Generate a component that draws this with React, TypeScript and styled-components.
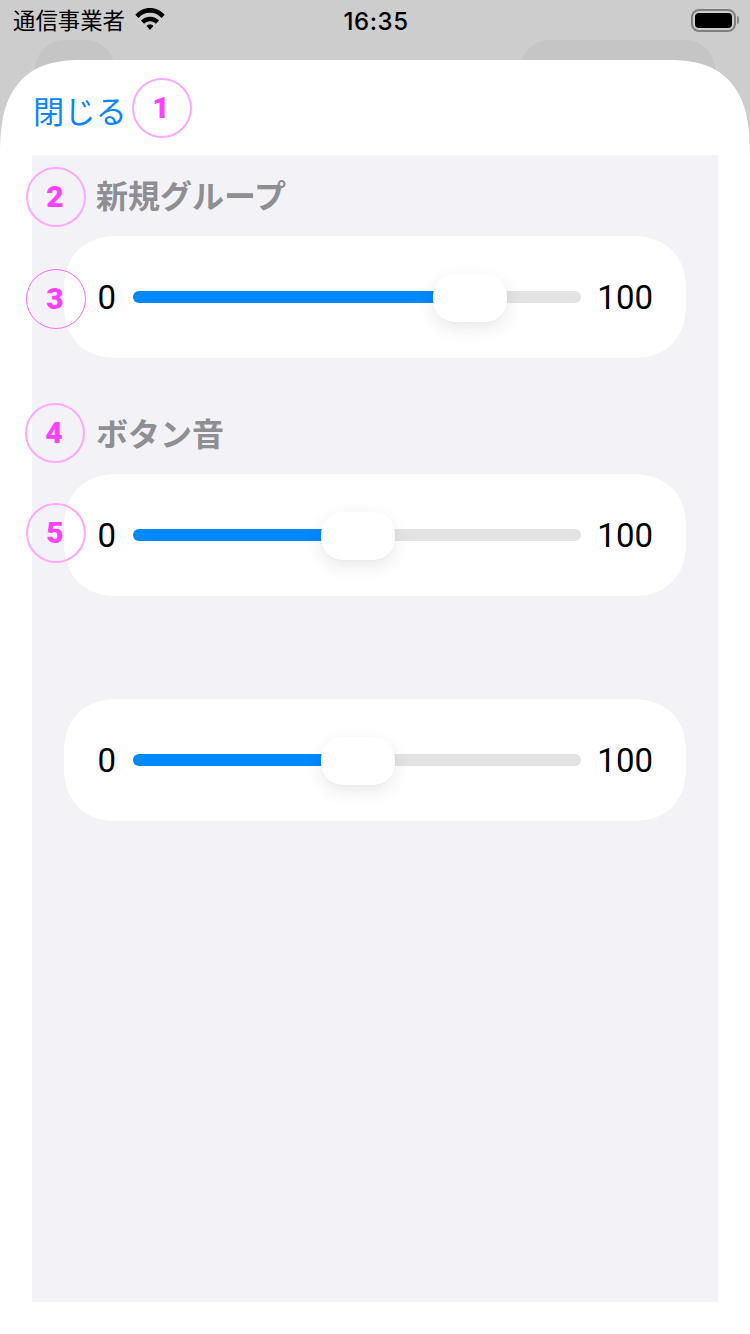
import { createGlobalStyle, styled } from 'styled-components';

const GlobalStyle = createGlobalStyle`
  html, body {
    margin: 0;
    padding: 0;
    background: #cdcdcd;
  }
  * {
    box-sizing: border-box;
  }
`;

const Screen = styled.div`
  position: relative;
  width: 750px;
  height: 1334px;
  overflow: hidden;
  background: #cdcdcd;
  font-family: Roboto, 'Noto Sans CJK JP', sans-serif;
`;

const StatusBar = styled.div`
  position: relative;
  display: grid;
  grid-template-columns: 1fr auto 1fr;
  align-items: center;
  height: 40px;
  padding: 0 11px 0 13px;
  color: #000;
`;

const Carrier = styled.div`
  display: flex;
  align-items: center;
  gap: 10px;
  padding-bottom: 3px;
  font-family: 'Noto Sans CJK JP', sans-serif;
  font-size: 22.4px;
  line-height: 36px;
`;

const Clock = styled.div`
  padding-top: 2px;
  font-family: Inter, sans-serif;
  font-size: 24px;
  font-weight: 500;
  letter-spacing: 0.6px;
`;

const Battery = styled.div`
  justify-self: end;
  display: flex;
  align-items: center;
  gap: 1px;
`;

const BatteryBody = styled.div`
  width: 45px;
  height: 23px;
  padding: 2px;
  border: 2px solid #7f7f7f;
  border-radius: 8px;
  &::after {
    content: '';
    display: block;
    height: 100%;
    background: #000;
    border-radius: 4px;
  }
`;

const BatteryCap = styled.div`
  width: 2px;
  height: 8px;
  background: #8a8a8a;
  border-radius: 0 2px 2px 0;
`;

const BackButton = styled.div<{ $left: number; $width: number }>`
  position: absolute;
  top: 40px;
  left: ${(p) => p.$left}px;
  width: ${(p) => p.$width}px;
  height: 60px;
  background: #c5c5c5;
  border-radius: 30px 30px 0 0;
`;

const Sheet = styled.div`
  position: relative;
  height: 1274px;
  margin-top: 20px;
  padding-bottom: 32px;
  display: flex;
  flex-direction: column;
  background: #fff;
  border-radius: 84px 84px 0 0 / 96px 96px 0 0;
  corner-shape: superellipse(1.4);
`;

const SheetHeader = styled.div`
  height: 95px;
  padding: 28px 0 0 33px;
`;

const CloseLink = styled.span`
  font-family: 'Noto Sans CJK JP', sans-serif;
  font-size: 31.2px;
  line-height: 44px;
  color: #0a84ff;
`;

const Panel = styled.div`
  flex: 1;
  margin: 0 32px;
  padding: 0 32px;
  background: #f2f2f7;
`;

const GroupTitle = styled.div`
  height: 81px;
  padding-left: 32px;
  font-family: 'Noto Sans CJK JP', sans-serif;
  font-size: 32px;
  font-weight: 700;
  line-height: 78px;
  color: #8e8e93;
`;

const Group = styled.section`
  margin-bottom: 35px;
`;

const Spacer = styled.div`
  height: 68px;
`;

const SliderCard = styled.div`
  display: flex;
  align-items: center;
  height: 122px;
  padding: 0 33px 0 33.5px;
  gap: 16.5px;
  background: #fff;
  border-radius: 54px;
  corner-shape: superellipse(1.2);
`;

const SliderLabel = styled.span`
  padding-top: 2px;
  font-size: 33px;
  font-weight: 400;
  color: #000;
  line-height: 120px;
`;

const Track = styled.div`
  position: relative;
  flex: 1;
  height: 12px;
  background: #e3e3e3;
  border-radius: 6px;
`;

const TrackFill = styled.div`
  height: 100%;
  background: #0088ff;
  border-radius: 6px 0 0 6px;
`;

const Thumb = styled.div`
  position: absolute;
  top: -17px;
  width: 74px;
  height: 48px;
  margin-left: -36px;
  background: #fff;
  border-radius: 24px;
  corner-shape: superellipse(1.2);
  box-shadow: 0 6px 18px rgba(0, 0, 0, 0.09), 0 1px 2px rgba(0, 0, 0, 0.02);
`;

const Marker = styled.div<{ $x: number; $y: number; $thin?: boolean }>`
  position: absolute;
  left: ${(p) => p.$x - 30}px;
  top: ${(p) => p.$y - 30}px;
  display: flex;
  align-items: center;
  justify-content: center;
  width: 60px;
  height: 60px;
  padding: 0 2px 2px 0;
  border: ${(p) => (p.$thin ? '1px solid #ff66ff' : '2px solid #ffa8ff')};
  border-radius: 50%;
  font-family: Roboto, sans-serif;
  font-size: 30px;
  font-weight: 900;
  color: #ff40ff;
`;

const markers = [
  { n: 1, x: 162, y: 108, thin: false },
  { n: 2, x: 56, y: 197, thin: false },
  { n: 3, x: 56, y: 299, thin: true },
  { n: 4, x: 55, y: 433, thin: false },
  { n: 5, x: 56, y: 533, thin: false },
];

const WifiIcon = () => (
  <svg width="30" height="22" viewBox="0 0 30 22">
    <path d="M0.3 6.800C4 2.500 9.300 0 15 0s11 2.500 14.700 6.800L26.500 10C23.600 6.700 19.600 4.800 15 4.800S6.400 6.700 3.500 10z" />
    <path d="M6 12.600C8.300 10.200 11.500 8.800 15 8.800s6.700 1.400 9 3.800l-3.100 3.100C19.400 14.200 17.300 13.300 15 13.300s-4.400.9-5.900 2.400z" />
    <path d="M11.600 18c.9-.9 2.100-1.400 3.400-1.400s2.500.5 3.400 1.400L15 22z" />
  </svg>
);

const VolumeSlider = ({ value }: { value: number }) => (
  <SliderCard>
    <SliderLabel>0</SliderLabel>
    <Track>
      <TrackFill style={{ width: `${value}%` }} />
      <Thumb style={{ left: `${value}%` }} />
    </Track>
    <SliderLabel>100</SliderLabel>
  </SliderCard>
);

export default function App() {
  return (
    <Screen>
      <GlobalStyle />
      <BackButton $left={35} $width={80} />
      <BackButton $left={520} $width={195} />
      <StatusBar>
        <Carrier>
          通信事業者
          <WifiIcon />
        </Carrier>
        <Clock>16:35</Clock>
        <Battery>
          <BatteryBody />
          <BatteryCap />
        </Battery>
      </StatusBar>
      <Sheet>
        <SheetHeader>
          <CloseLink>閉じる</CloseLink>
        </SheetHeader>
        <Panel>
          <Group>
            <GroupTitle>新規グループ</GroupTitle>
            <VolumeSlider value={75} />
          </Group>
          <Group>
            <GroupTitle>ボタン音</GroupTitle>
            <VolumeSlider value={50} />
          </Group>
          <Spacer />
          <VolumeSlider value={50} />
        </Panel>
      </Sheet>
      {markers.map((m) => (
        <Marker key={m.n} $x={m.x} $y={m.y} $thin={m.thin}>
          {m.n}
        </Marker>
      ))}
    </Screen>
  );
}
